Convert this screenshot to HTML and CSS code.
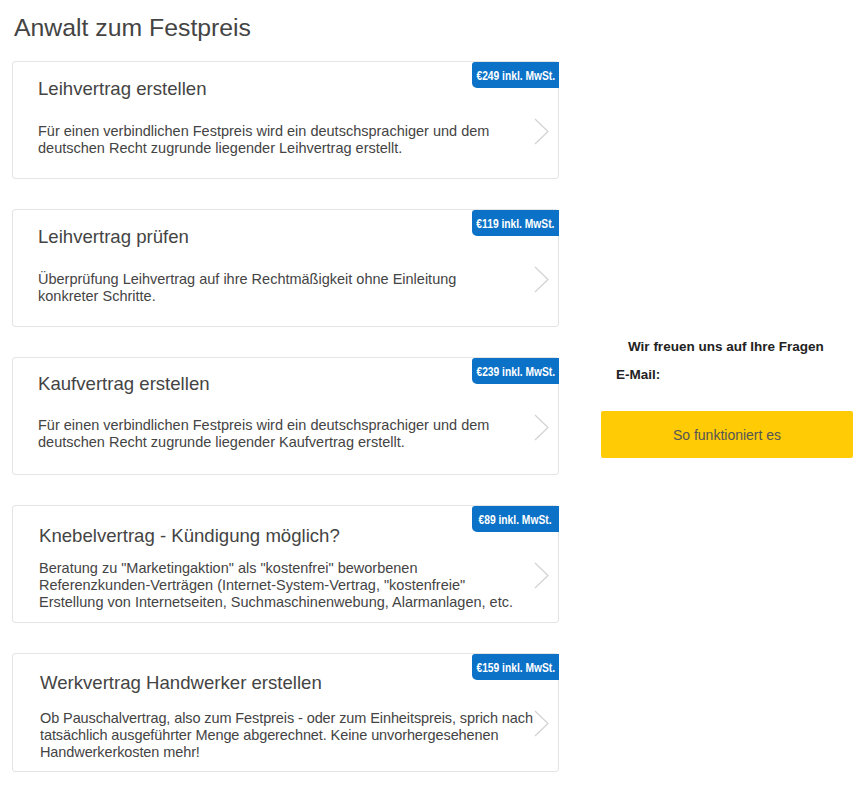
FILE: index.html
```html
<!DOCTYPE html>
<html lang="de">
<head>
<meta charset="utf-8">
<title>Anwalt zum Festpreis</title>
<link rel="stylesheet" href="styles.css">
</head>
<body>
<div class="page">
  <main class="main">
    <h1 class="page-title">Anwalt zum Festpreis</h1>
    <div class="cards">
      <a class="card">
        <span class="badge"><span class="badge-text">€249 inkl. MwSt.</span></span>
        <div class="card-body">
          <h2 class="card-title">Leihvertrag erstellen</h2>
          <p class="card-text">Für einen verbindlichen Festpreis wird ein deutschsprachiger und dem<br>deutschen Recht zugrunde liegender Leihvertrag erstellt.</p>
        </div>
        <svg class="chevron" width="15" height="27" viewBox="0 0 15 27"><polyline points="1,1 14,13.5 1,26" fill="none" stroke="#d2d2d2" stroke-width="1.2"/></svg>
      </a>
      <a class="card">
        <span class="badge"><span class="badge-text">€119 inkl. MwSt.</span></span>
        <div class="card-body">
          <h2 class="card-title">Leihvertrag prüfen</h2>
          <p class="card-text">Überprüfung Leihvertrag auf ihre Rechtmäßigkeit ohne Einleitung<br>konkreter Schritte.</p>
        </div>
        <svg class="chevron" width="15" height="27" viewBox="0 0 15 27"><polyline points="1,1 14,13.5 1,26" fill="none" stroke="#d2d2d2" stroke-width="1.2"/></svg>
      </a>
      <a class="card card-mid">
        <span class="badge"><span class="badge-text">€239 inkl. MwSt.</span></span>
        <div class="card-body">
          <h2 class="card-title">Kaufvertrag erstellen</h2>
          <p class="card-text">Für einen verbindlichen Festpreis wird ein deutschsprachiger und dem<br>deutschen Recht zugrunde liegender Kaufvertrag erstellt.</p>
        </div>
        <svg class="chevron" width="15" height="27" viewBox="0 0 15 27"><polyline points="1,1 14,13.5 1,26" fill="none" stroke="#d2d2d2" stroke-width="1.2"/></svg>
      </a>
      <a class="card card-long">
        <span class="badge"><span class="badge-text">€89 inkl. MwSt.</span></span>
        <div class="card-body">
          <h2 class="card-title">Knebelvertrag - Kündigung möglich?</h2>
          <p class="card-text">Beratung zu "Marketingaktion" als "kostenfrei" beworbenen<br>Referenzkunden-Verträgen (Internet-System-Vertrag, "kostenfreie"<br>Erstellung von Internetseiten, Suchmaschinenwebung, Alarmanlagen, etc.</p>
        </div>
        <svg class="chevron" width="15" height="27" viewBox="0 0 15 27"><polyline points="1,1 14,13.5 1,26" fill="none" stroke="#d2d2d2" stroke-width="1.2"/></svg>
      </a>
      <a class="card card-long card-last">
        <span class="badge"><span class="badge-text">€159 inkl. MwSt.</span></span>
        <div class="card-body">
          <h2 class="card-title">Werkvertrag Handwerker erstellen</h2>
          <p class="card-text card-text-tight">Ob Pauschalvertrag, also zum Festpreis - oder zum Einheitspreis, sprich nach<br>tatsächlich ausgeführter Menge abgerechnet. Keine unvorhergesehenen<br>Handwerkerkosten mehr!</p>
        </div>
        <svg class="chevron" width="15" height="27" viewBox="0 0 15 27"><polyline points="1,1 14,13.5 1,26" fill="none" stroke="#d2d2d2" stroke-width="1.2"/></svg>
      </a>
    </div>
  </main>
  <aside class="side">
    <p class="side-lead">Wir freuen uns auf Ihre Fragen</p>
    <p class="side-mail">E-Mail:</p>
    <a class="cta">So funktioniert es</a>
  </aside>
</div>
</body>
</html>
```
FILE: styles.css
```css
* { box-sizing: border-box; }
html, body { margin: 0; padding: 0; background: #fff; }
body {
  font-family: "Liberation Sans", Arial, Helvetica, sans-serif;
  color: #444;
  width: 868px;
  height: 785px;
  overflow: hidden;
}
.page {
  display: flex;
  align-items: flex-start;
}
.main {
  width: 559px;
  padding-left: 12px;
  padding-top: 13px;
}
.page-title {
  margin: 0 0 18px 2px;
  font-size: 24.8px;
  line-height: 30px;
  font-weight: normal;
  color: #444;
}
.cards {
  display: flex;
  flex-direction: column;
  gap: 30px;
}
.card {
  position: relative;
  display: flex;
  height: 118px;
  border: 1px solid #e4e4e4;
  border-radius: 3px;
  background: #fff;
  color: #444;
  text-decoration: none;
}
.card-last {
  height: 119px;
}
.card-body {
  flex: 1;
  min-width: 0;
  display: flex;
  flex-direction: column;
  padding: 15px 0 0 25px;
  gap: 22px;
}
.card-mid .card-body {
  padding-top: 14px;
  gap: 21px;
}
.card-long .card-body {
  padding-top: 18px;
  padding-left: 26px;
  gap: 12px;
}
.card-last .card-body {
  padding-top: 17px;
  padding-left: 27px;
  gap: 15px;
}
.card-title {
  margin: 0;
  font-size: 18.6px;
  line-height: 24px;
  font-weight: normal;
  color: #444;
}
.card-text {
  margin: 0;
  font-size: 14.5px;
  line-height: 17px;
  color: #444;
  white-space: nowrap;
}
.card-text-tight {
  letter-spacing: -0.1px;
}
.chevron {
  flex: none;
  align-self: flex-start;
  margin: 56px 9px 0 0;
}
.badge {
  position: absolute;
  top: 0;
  right: -1px;
  width: 87px;
  height: 26px;
  display: flex;
  align-items: center;
  justify-content: center;
  background: #0b72c7;
  color: #fff;
  border-radius: 3px 0 0 5px;
}
.badge-text {
  display: inline-block;
  white-space: nowrap;
  font-family: "Liberation Sans", Arial, sans-serif;
  font-weight: bold;
  font-size: 13.5px;
  line-height: 15px;
  transform: scaleX(0.76);
}
.side {
  width: 252px;
  margin-left: 42px;
  padding-top: 339px;
}
.side-lead {
  margin: 0 0 12px 27px;
  font-size: 13.5px;
  line-height: 16px;
  font-weight: bold;
  color: #222;
}
.side-mail {
  margin: 0 0 28px 15px;
  font-size: 13.5px;
  line-height: 16px;
  font-weight: bold;
  color: #222;
}
.cta {
  display: flex;
  align-items: center;
  justify-content: center;
  height: 47px;
  background: #ffcb05;
  border-radius: 2px;
  color: #555;
  font-size: 14px;
  text-decoration: none;
}
```
